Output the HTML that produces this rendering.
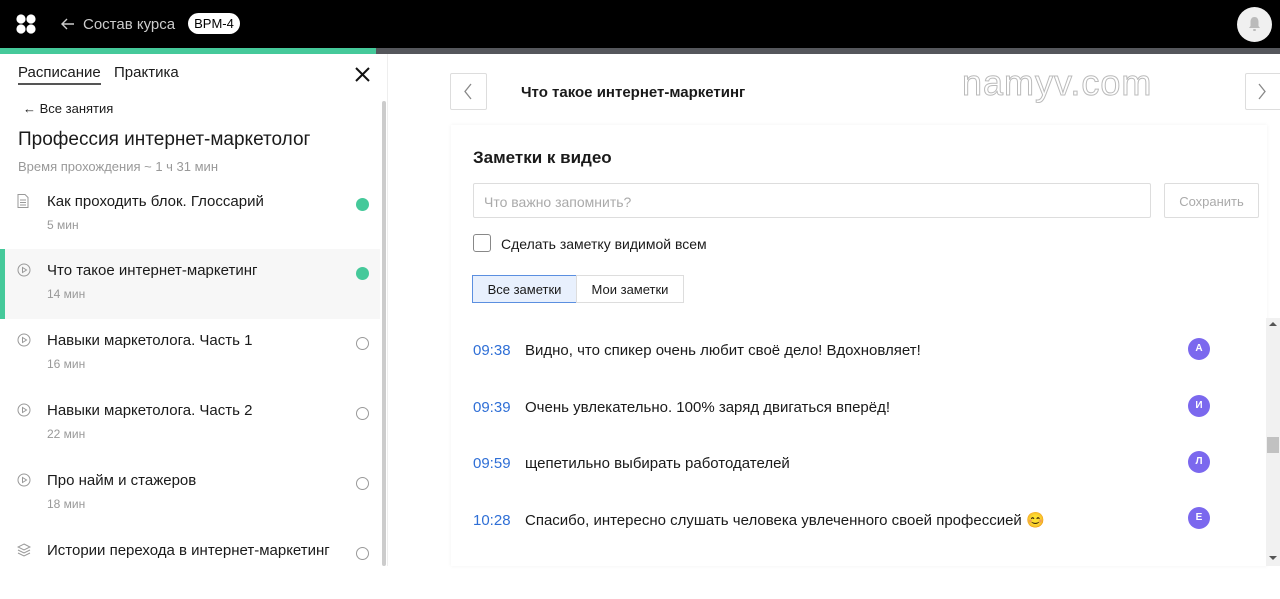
<!DOCTYPE html>
<html><head><meta charset="utf-8"><style>
*{margin:0;padding:0;box-sizing:border-box}
body{width:1280px;height:566px;overflow:hidden;background:#fff;font-family:"Liberation Sans","Noto Sans CJK SC",sans-serif;color:#1a1a1a;position:relative}
.a{position:absolute}
.top{left:0;top:0;width:1280px;height:48px;background:#000}
.prog{left:0;top:48px;width:1280px;height:6px;background:#55575c}
.prog i{position:absolute;left:0;top:0;width:376px;height:6px;background:#45c99a}
.side{left:0;top:54px;width:388px;height:512px;border-right:1px solid #eee}
.row{position:absolute;left:0;width:380px;height:70px}
.row .t{position:absolute;left:47px;top:13px;font-size:15px;color:#1a1a1a}
.row .m{position:absolute;left:47px;top:38px;font-size:12px;color:#999}
.row .d{position:absolute;left:356px;top:18px;width:13px;height:13px;border-radius:50%;border:1px solid #999}
.row .d.g{background:#45c99a;border:none}
.row svg{position:absolute;left:17px;top:14px}
.note{position:absolute;left:473px;font-size:15px}
.note b{font-weight:normal;color:#2f6fd6;display:inline-block;width:52px}
.av{position:absolute;left:1188px;width:22px;height:22px;border-radius:50%;background:#7b68ee;color:#fff;font-size:10px;font-weight:bold;text-align:center;line-height:22px}
</style></head><body>
<div class="a top">
 <svg class="a" style="left:16px;top:14px" width="20" height="20" viewBox="0 0 20 20" fill="#fff"><circle cx="5" cy="5" r="4.6"/><circle cx="15" cy="5" r="4.6"/><circle cx="5" cy="15" r="4.6"/><circle cx="15" cy="15" r="4.6"/></svg>
 <svg class="a" style="left:61px;top:17px" width="14" height="14" viewBox="0 0 14 14" fill="none" stroke="#ccc" stroke-width="1.4"><path d="M13 7H1M6 2L1 7l5 5"/></svg>
 <div class="a" style="left:83px;top:16px;font-size:15px;color:#ccc">Состав курса</div>
 <div class="a" style="left:188px;top:13px;width:52px;height:21px;border-radius:11px;background:#fff;color:#000;font-size:13px;text-align:center;line-height:21px">BPM-4</div>
 <div class="a" style="left:1237px;top:7px;width:35px;height:35px;border-radius:50%;background:#f0f0f0"></div>
 <svg class="a" style="left:1247px;top:16px" width="15" height="16" viewBox="0 0 15 16" fill="#bbb"><path d="M7.5 1C4.5 1 3.5 3.5 3.5 6v4L2 12h11l-1.5-2V6C11.5 3.5 10.5 1 7.5 1z"/><rect x="6" y="13" width="3" height="2" rx="1"/></svg>
</div>
<div class="a prog"><i></i></div>
<div class="a side">
 <div class="a" style="left:18px;top:10px;font-size:15px">Расписание</div>
 <div class="a" style="left:18px;top:29px;width:83px;height:2px;background:#555"></div>
 <div class="a" style="left:114px;top:10px;font-size:15px">Практика</div>
 <svg class="a" style="left:355px;top:13px" width="15" height="15" viewBox="0 0 15 15" stroke="#111" stroke-width="2"><path d="M1 1l13 13M14 1L1 14"/></svg>
 <div class="a" style="left:382px;top:47px;width:4px;height:465px;background:#ccc;border-radius:2px"></div>
 <div class="a" style="left:23px;top:47px;font-size:13px">← Все занятия</div>
 <div class="a" style="left:18px;top:75px;font-size:19px">Профессия интернет-маркетолог</div>
 <div class="a" style="left:18px;top:105px;font-size:13px;color:#999">Время прохождения ~ 1 ч 31 мин</div>
 <div class="row" style="top:126px"><svg width="12" height="14" viewBox="0 0 12 14" fill="none" stroke="#999"><path d="M1 .5h7l3 3v10H1z M3 6h6M3 8.5h6M3 11h6"/></svg><div class="t">Как проходить блок. Глоссарий</div><div class="m">5 мин</div><div class="d g"></div></div>
 <div class="row" style="top:195px;background:#f7f7f7"><div class="a" style="left:0;top:0;width:5px;height:70px;background:#45c99a"></div><svg width="14" height="14" viewBox="0 0 14 14" fill="none" stroke="#999"><circle cx="7" cy="7" r="6"/><path d="M5.5 4.5v5l4-2.5z"/></svg><div class="t">Что такое интернет-маркетинг</div><div class="m">14 мин</div><div class="d g"></div></div>
 <div class="row" style="top:265px"><svg width="14" height="14" viewBox="0 0 14 14" fill="none" stroke="#999"><circle cx="7" cy="7" r="6"/><path d="M5.5 4.5v5l4-2.5z"/></svg><div class="t">Навыки маркетолога. Часть 1</div><div class="m">16 мин</div><div class="d"></div></div>
 <div class="row" style="top:335px"><svg width="14" height="14" viewBox="0 0 14 14" fill="none" stroke="#999"><circle cx="7" cy="7" r="6"/><path d="M5.5 4.5v5l4-2.5z"/></svg><div class="t">Навыки маркетолога. Часть 2</div><div class="m">22 мин</div><div class="d"></div></div>
 <div class="row" style="top:405px"><svg width="14" height="14" viewBox="0 0 14 14" fill="none" stroke="#999"><circle cx="7" cy="7" r="6"/><path d="M5.5 4.5v5l4-2.5z"/></svg><div class="t">Про найм и стажеров</div><div class="m">18 мин</div><div class="d"></div></div>
 <div class="row" style="top:475px"><svg width="14" height="14" viewBox="0 0 14 14" fill="none" stroke="#999"><path d="M7 1l6 3-6 3-6-3z M1 7l6 3 6-3 M1 10l6 3 6-3"/></svg><div class="t">Истории перехода в интернет-маркетинг</div><div class="d"></div></div>
</div>
<div class="a" style="left:450px;top:73px;width:37px;height:37px;border:1px solid #ddd;border-radius:2px"></div>
<svg class="a" style="left:463px;top:83px" width="10" height="17" viewBox="0 0 10 17" fill="none" stroke="#888" stroke-width="1.3"><path d="M8 1L2 8.5 8 16"/></svg>
<div class="a" style="left:521px;top:84px;font-size:15px;font-weight:bold">Что такое интернет-маркетинг</div>
<div class="a" style="left:962px;top:62px;font-size:36px;color:#fff;-webkit-text-stroke:1px #bbb;letter-spacing:1px">namyv.com</div>
<div class="a" style="left:1245px;top:73px;width:40px;height:37px;border:1px solid #ddd;border-radius:2px"></div>
<svg class="a" style="left:1257px;top:83px" width="10" height="17" viewBox="0 0 10 17" fill="none" stroke="#888" stroke-width="1.3"><path d="M2 1l6 7.5L2 16"/></svg>
<div class="a" style="left:451px;top:125px;width:816px;height:441px;background:#fff;box-shadow:0 0 4px rgba(0,0,0,.06)"></div>
<div class="a" style="left:473px;top:148px;font-size:17px;font-weight:bold">Заметки к видео</div>
<div class="a" style="left:473px;top:183px;width:678px;height:35px;border:1px solid #ddd;border-radius:2px"></div>
<div class="a" style="left:484px;top:194px;font-size:14px;color:#aaa">Что важно запомнить?</div>
<div class="a" style="left:1164px;top:183px;width:95px;height:35px;border:1px solid #ddd;border-radius:2px;font-size:13px;color:#aaa;text-align:center;line-height:35px">Сохранить</div>
<div class="a" style="left:473px;top:234px;width:18px;height:18px;border:1.5px solid #888;border-radius:3px"></div>
<div class="a" style="left:501px;top:236px;font-size:14px">Сделать заметку видимой всем</div>
<div class="a" style="left:472px;top:275px;width:105px;height:28px;border:1px solid #5b8fe0;background:#e8f0fd;font-size:13px;text-align:center;line-height:27px">Все заметки</div>
<div class="a" style="left:576px;top:275px;width:108px;height:28px;border:1px solid #ddd;font-size:13px;text-align:center;line-height:27px">Мои заметки</div>
<div class="a" style="left:1266px;top:318px;width:14px;height:248px;background:#f1f1f1"></div>
<div class="a" style="left:1267px;top:437px;width:12px;height:16px;background:#c1c1c1"></div>
<div class="a" style="left:1269px;top:322px;width:0;height:0;border:4px solid transparent;border-bottom-color:#555;border-top:0"></div>
<div class="a" style="left:1269px;top:556px;width:0;height:0;border:4px solid transparent;border-top-color:#555;border-bottom:0"></div>
<div class="note" style="top:342px"><b>09:38</b>Видно, что спикер очень любит своё дело! Вдохновляет!</div>
<div class="note" style="top:399px"><b>09:39</b>Очень увлекательно. 100% заряд двигаться вперёд!</div>
<div class="note" style="top:455px"><b>09:59</b>щепетильно выбирать работодателей</div>
<div class="note" style="top:511px"><b>10:28</b>Спасибо, интересно слушать человека увлеченного своей профессией 😊</div>
<div class="av" style="top:338px">А</div>
<div class="av" style="top:395px">И</div>
<div class="av" style="top:451px">Л</div>
<div class="av" style="top:507px">Е</div>
</body></html>
